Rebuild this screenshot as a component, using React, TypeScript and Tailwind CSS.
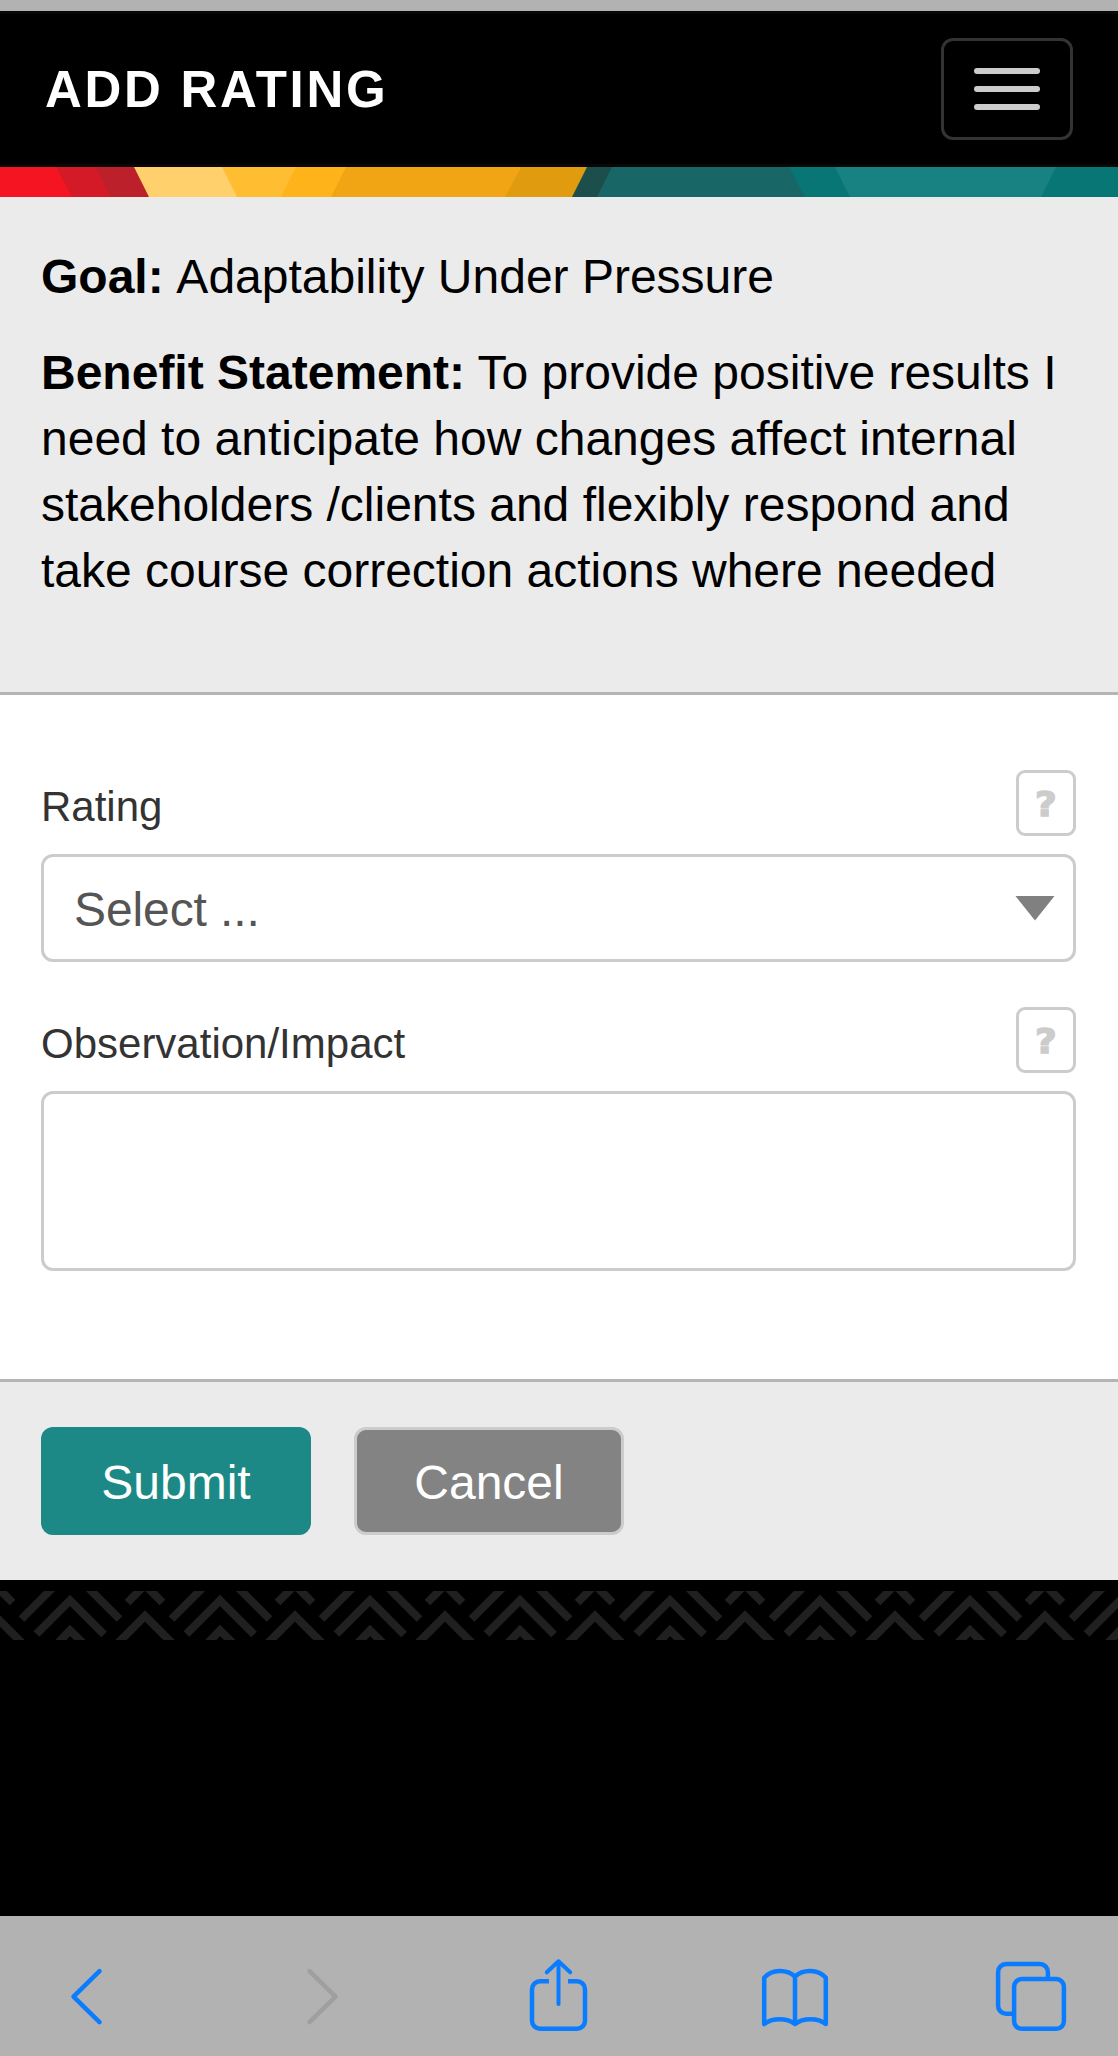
import { useState } from "react";
import type { ReactNode } from "react";

type StripeProps = {
  fill: string;
  points: string;
};

const headerStripes: StripeProps[] = [
  { fill: "#087674", points: "1055,0 1118,0 1118,30 1040,30" },
  { fill: "#178281", points: "834,0 1056,0 1041,30 849,30" },
  { fill: "#087674", points: "788,0 835,0 850,30 804,30" },
  { fill: "#186766", points: "611,0 789,0 805,30 596,30" },
  { fill: "#1c4f4c", points: "586,0 612,0 597,30 571,30" },
  { fill: "#e09c0e", points: "520,0 587,0 572,30 504,30" },
  { fill: "#f1a514", points: "345,0 521,0 505,30 330,30" },
  { fill: "#ffb31b", points: "295,0 346,0 331,30 280,30" },
  { fill: "#ffbe32", points: "221,0 296,0 281,30 236,30" },
  { fill: "#ffd06c", points: "133,0 222,0 237,30 148,30" },
  { fill: "#bb202b", points: "95,0 134,0 149,30 110,30" },
  { fill: "#d31a26", points: "55,0 96,0 111,30 71,30" },
  { fill: "#f51522", points: "0,0 56,0 72,30 0,30" },
];

function Header() {
  return (
    <header>
      <div className="flex h-[156px] items-center justify-between border-y-[3px] border-[#080808] bg-black px-[45px]">
        <h1 className="pt-[2px] text-[51px] leading-[66px] font-bold tracking-[2.7px] text-white">ADD RATING</h1>
        <button
          type="button"
          aria-label="Toggle navigation"
          className="flex h-[102px] w-[132px] flex-col items-center justify-center gap-3 rounded-xl border-[3px] border-[#333]"
        >
          <span className="h-[6px] w-[66px] rounded-[3px] bg-[#ccc]" />
          <span className="h-[6px] w-[66px] rounded-[3px] bg-[#ccc]" />
          <span className="h-[6px] w-[66px] rounded-[3px] bg-[#ccc]" />
        </button>
      </div>
      <svg className="block h-[30px] w-full" viewBox="0 0 1118 30" preserveAspectRatio="none">
        {headerStripes.map((stripe) => (
          <polygon key={stripe.points} fill={stripe.fill} points={stripe.points} />
        ))}
      </svg>
    </header>
  );
}

function FieldLabel({ htmlFor, children }: { htmlFor: string; children: ReactNode }) {
  return (
    <div className="flex h-[66px] justify-between">
      <label htmlFor={htmlFor} className="pt-[7px] text-[42px] leading-[60px] text-[#333]">
        {children}
      </label>
      <button
        type="button"
        aria-label="Help"
        className="flex h-[66px] w-[60px] items-center justify-center rounded-[9px] border-[3px] border-[#ccc] pt-[2px] font-['DejaVu_Sans',sans-serif] text-[34px] leading-none font-bold text-[#ccc]"
      >
        <span className="scale-x-110 [-webkit-text-stroke:1.5px_#ccc]">?</span>
      </button>
    </div>
  );
}

// Zigzag band under the form, one tile is 150px wide
function Zigzag() {
  return (
    <svg className="block h-[60px] w-full" aria-hidden="true">
      <defs>
        <pattern id="zigzag" width="150" height="60" patternUnits="userSpaceOnUse">
          <g fill="none" stroke="#202020" strokeWidth="8">
            <path d="M36.5 54 70 20.5 104 54.5" />
            <path d="M55 66 70 50.5 86 66" />
            <path d="M55 5.5 21.5 39M86 5.5 119.5 39" />
            <path d="M111 70 145 36 179 70M-39 70 -5 36 29 70" />
            <path d="M145 5 127.5 22.5M145 5 162.5 22.5M-5 5 12.5 22.5" />
          </g>
          <rect width="150" height="11" fill="#000" />
        </pattern>
      </defs>
      <rect width="100%" height="60" fill="url(#zigzag)" />
    </svg>
  );
}

function ToolbarIcon({ label, muted, children }: { label: string; muted?: boolean; children: ReactNode }) {
  return (
    <button type="button" aria-label={label} disabled={muted} className={muted ? "text-[#9f9f9f]" : "text-[#0a7cff]"}>
      <svg
        className="block h-[90px] w-[72px]"
        viewBox="0 0 72 90"
        fill="none"
        stroke="currentColor"
        strokeWidth="4.5"
        strokeLinejoin="round"
      >
        {children}
      </svg>
    </button>
  );
}

function BrowserToolbar() {
  return (
    <nav className="flex h-[140px] items-start justify-between bg-[#b2b2b2] px-[51px] pt-[34px]">
      <ToolbarIcon label="Back">
        <path d="M48.5 21.2 22.5 46.7 48.5 72.2" strokeLinecap="round" />
      </ToolbarIcon>
      <ToolbarIcon label="Forward" muted>
        <path d="M22.5 21.2 48.5 46.7 22.5 72.2" strokeLinecap="round" />
      </ToolbarIcon>
      <ToolbarIcon label="Share">
        <path d="M26 31.3H17a8 8 0 0 0-8 8V70.7a8 8 0 0 0 8 8H54a8 8 0 0 0 8-8V39.3a8 8 0 0 0-8-8H45" />
        <path d="M35.5 12V54M23.8 22.3 35.5 11.3 47.2 22.3" strokeWidth="4" strokeLinecap="round" />
      </ToolbarIcon>
      <ToolbarIcon label="Bookmarks">
        <path d="M5.2 74V27.700C13 19 28 19 36 26.500 44 19 59 19 66.800 27.700V74C59 67.500 44 67.500 36 74 28 67.500 13 67.500 5.200 74ZM36 26.500V74" />
      </ToolbarIcon>
      <ToolbarIcon label="Tabs">
        <path d="M52.9 29V22a8 8 0 0 0-8-8H11.1a8 8 0 0 0-8 8V55.700a8 8 0 0 0 8 8H19" />
        <rect x="19.1" y="29.1" width="49.8" height="49.7" rx="7.5" />
      </ToolbarIcon>
    </nav>
  );
}

export default function App() {
  const [observation, setObservation] = useState("");

  return (
    <div className="flex h-[2056px] w-[1118px] flex-col overflow-hidden bg-black font-['Liberation_Sans',Arial,sans-serif]">
      <div className="h-[11px] bg-[#b2b2b2]" />
      <Header />

      <section className="h-[498px] border-b-[3px] border-[#b5b5b5] bg-[#ebebeb] px-[41px] pt-[47px] text-[48px] leading-[66px] text-black">
        <p>
          <strong className="mr-[2px]">Goal:</strong> Adaptability Under Pressure
        </p>
        <p className="mt-[30px]">
          <strong>Benefit Statement:</strong> To provide positive results I
          <br />
          need to anticipate how changes affect internal
          <br />
          stakeholders /clients and flexibly respond and
          <br />
          take course correction actions where needed
        </p>
      </section>

      <form className="flex flex-col" onSubmit={(event) => event.preventDefault()}>
        <div className="flex h-[684px] flex-col bg-white pt-[75px] pr-[42px] pl-[41px]">
          <FieldLabel htmlFor="rating">Rating</FieldLabel>
          <button
            id="rating"
            type="button"
            className="mt-[18px] flex h-[108px] items-center justify-between rounded-xl border-[3px] border-[#ccc] pr-[18px] pl-[30px] text-[48px] leading-[66px] text-[#555]"
          >
            <span className="pt-[4px] tracking-[-0.1px]">Select ...</span>
            <svg className="h-[25px] w-[40px]" viewBox="0 0 40 25">
              <path d="M0.5 0H39.5L20 24.5Z" fill="#808080" />
            </svg>
          </button>

          <div className="mt-[45px] flex flex-col">
            <FieldLabel htmlFor="observation">Observation/Impact</FieldLabel>
            <textarea
              id="observation"
              value={observation}
              onChange={(event) => setObservation(event.target.value)}
              className="mt-[18px] h-[180px] resize-none rounded-xl border-[3px] border-[#ccc] px-[31px] py-[18px] text-[48px] leading-[66px] text-[#555]"
            />
          </div>
        </div>

        <div className="flex h-[201px] gap-[43px] border-t-[3px] border-[#b5b5b5] bg-[#ebebeb] px-[41px] pt-[45px]">
          <button
            type="submit"
            className="h-[108px] w-[270px] rounded-xl bg-[#1c8986] pt-[4px] text-[48px] leading-[66px] text-white"
          >
            Submit
          </button>
          <button
            type="button"
            className="h-[108px] w-[270px] rounded-xl border-[3px] border-[#ccc] bg-[#838383] pt-[4px] text-[48px] leading-[66px] text-white"
          >
            Cancel
          </button>
        </div>
      </form>

      <div className="h-[336px]">
        <Zigzag />
      </div>
      <BrowserToolbar />
    </div>
  );
}
